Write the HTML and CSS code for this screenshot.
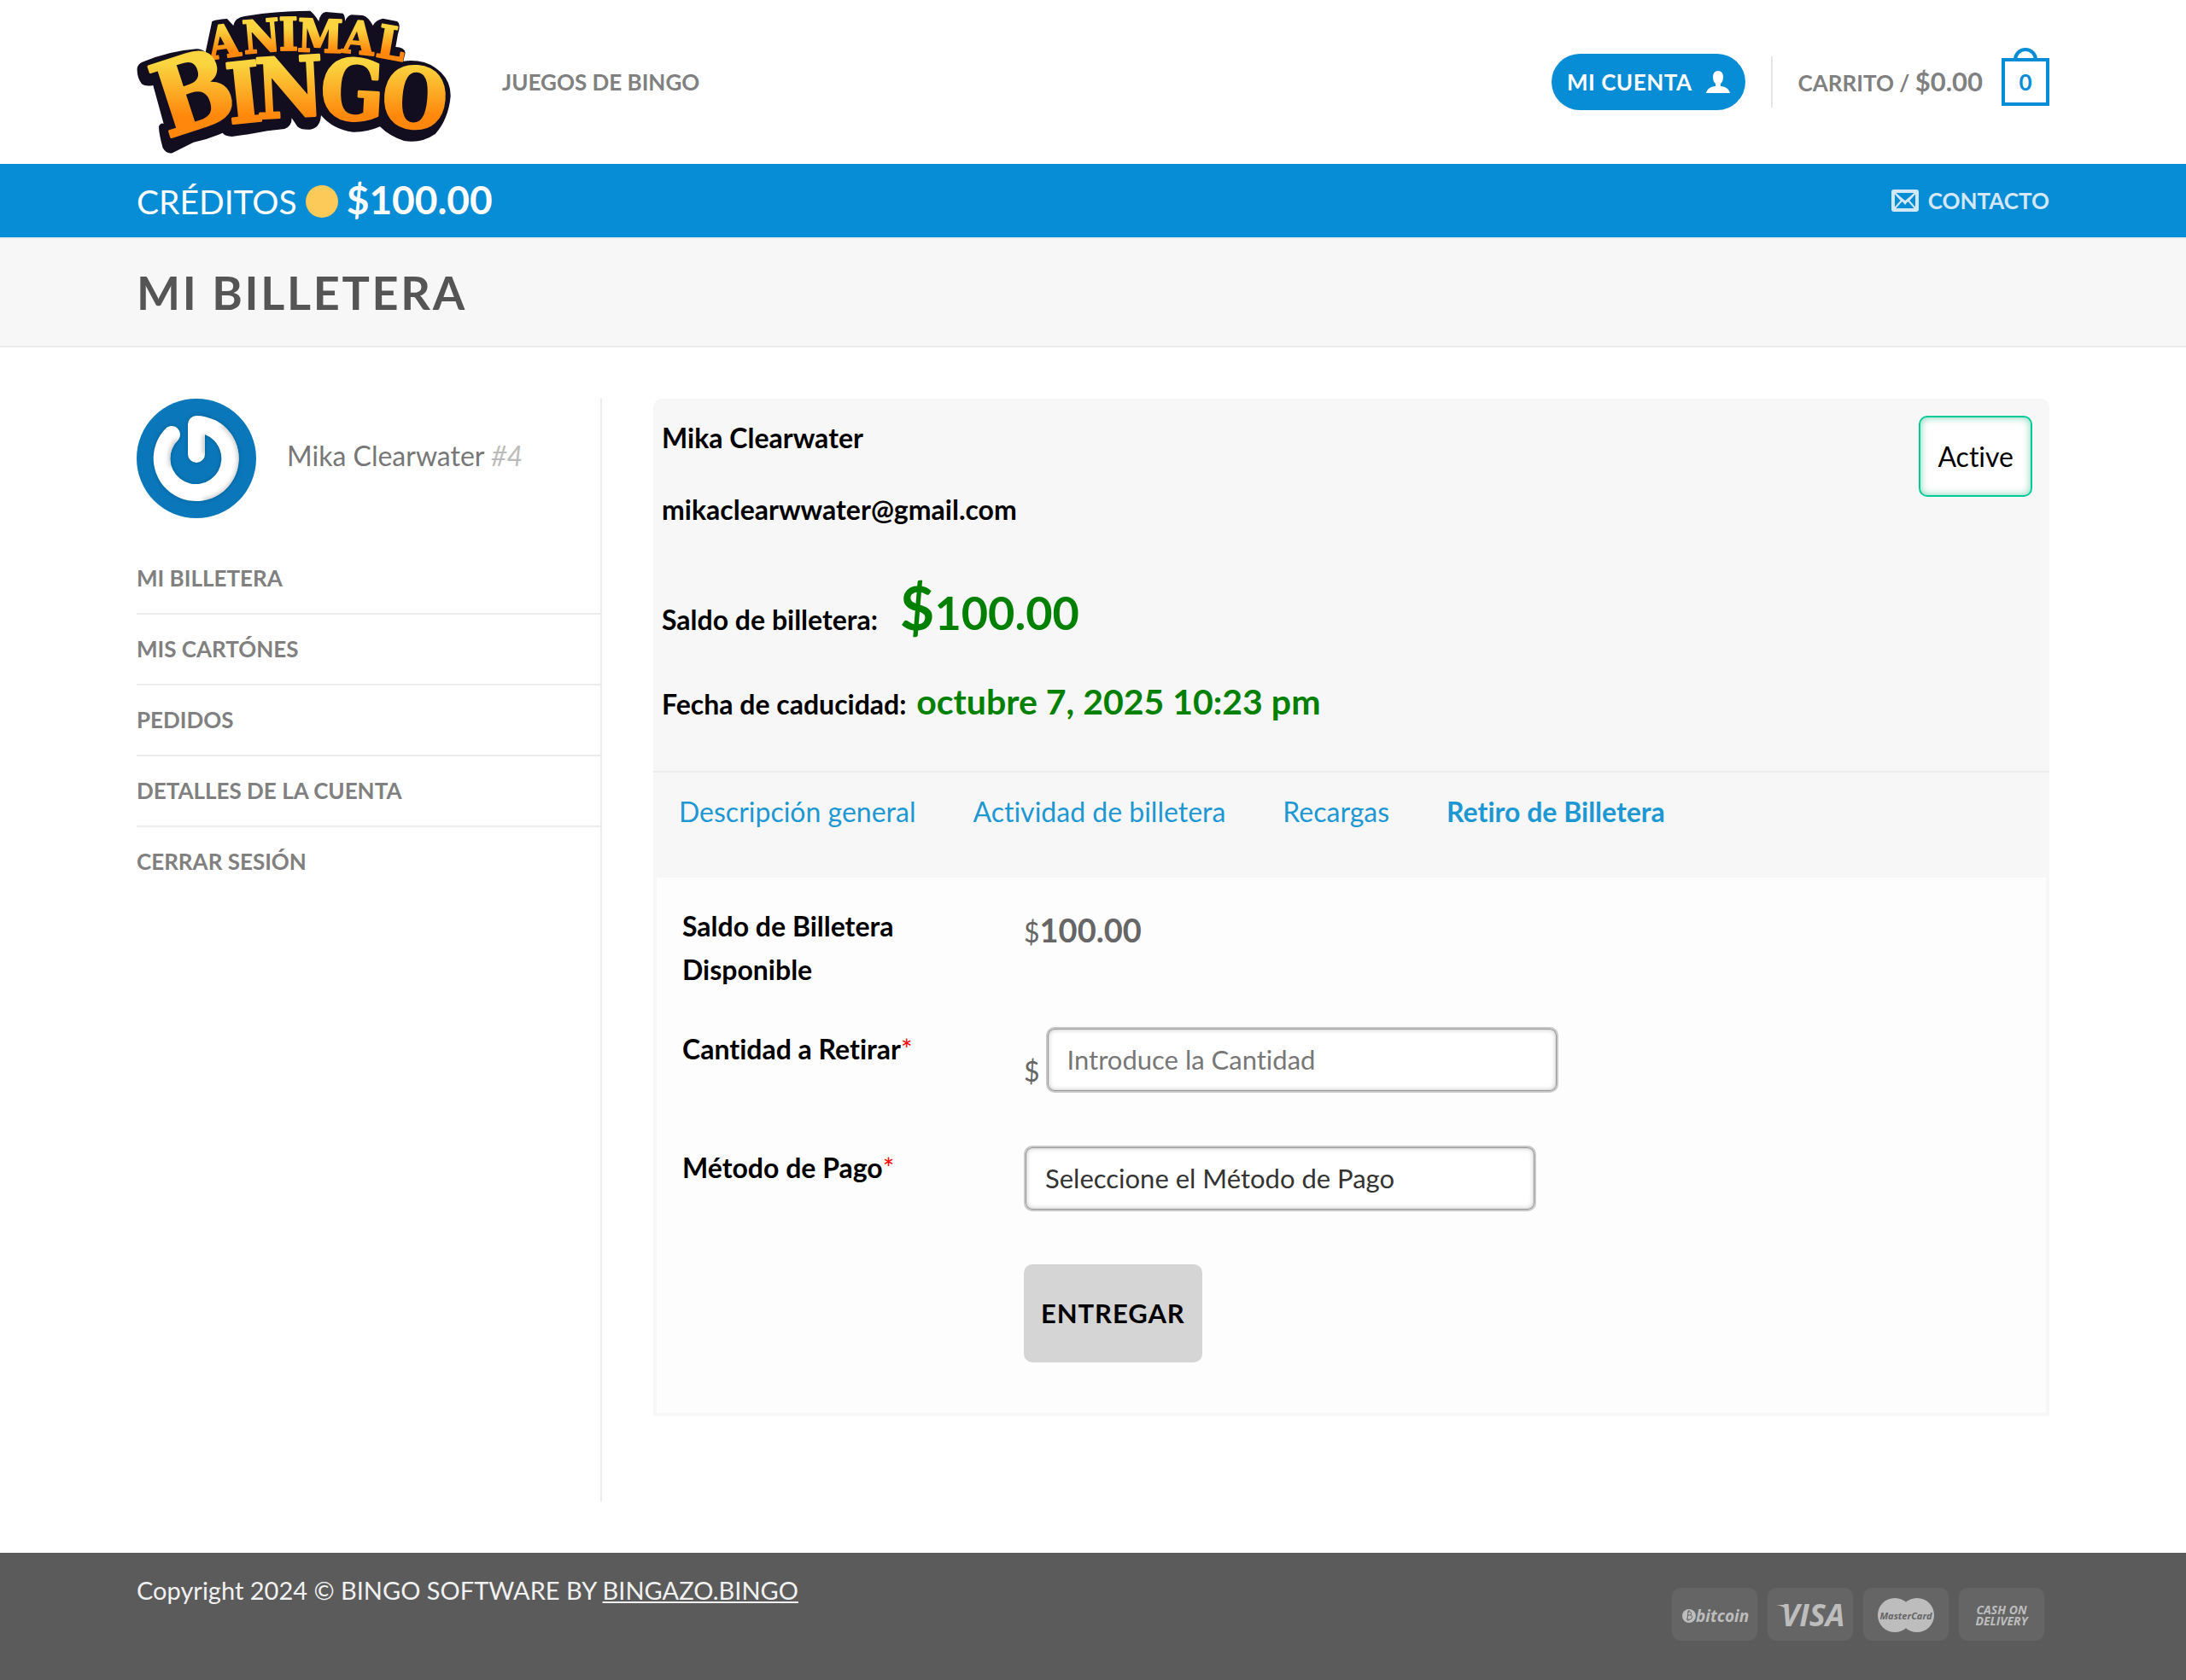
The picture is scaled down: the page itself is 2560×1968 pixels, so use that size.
FILE: index.html
```html
<!DOCTYPE html>
<html lang="es">
<head>
    <meta charset="UTF-8">
    <meta name="viewport" content="width=device-width, initial-scale=1.0">
    <title>Mi Billetera - Animal Bingo</title>
    <link rel="stylesheet" href="styles.css">
</head>
<body>
<header>
    <div class="container header-main">
        <a href="#" class="logo" aria-label="Animal Bingo">
            <svg width="370" height="172" viewBox="0 0 370 172">
                <defs>
                    <linearGradient id="gold-top" gradientUnits="userSpaceOnUse" x1="0" y1="8" x2="0" y2="58">
                        <stop offset="0.3" stop-color="#fad540"/>
                        <stop offset="0.85" stop-color="#ff870c"/>
                    </linearGradient>
                    <linearGradient id="gold-bottom" gradientUnits="userSpaceOnUse" x1="0" y1="55" x2="0" y2="150">
                        <stop offset="0.1" stop-color="#fad540"/>
                        <stop offset="0.75" stop-color="#ff870c"/>
                    </linearGradient>
                </defs>
                <!-- fondo oscuro del logo -->
                <path transform="translate(-20 -10) scale(0.3333)" fill="#120d1f" d="M62 240Q64 225 80 218Q180 178 270 172Q290 172 302 184L325 75Q345 68 378 66L400 90Q405 62 440 57L500 48Q600 38 670 38Q685 50 700 75Q705 45 725 42L785 47Q793 55 792 75Q800 55 815 52L855 54Q875 60 890 90Q900 70 925 65L975 75Q990 85 978 120L970 165Q1000 165 1004 185L997 215Q1080 205 1130 255Q1165 290 1163 340Q1155 420 1110 470Q1060 505 1000 495Q950 480 915 445Q870 465 820 464Q750 455 708 405Q705 450 670 455Q640 458 625 445L605 415Q605 445 580 453L520 460Q440 475 395 480Q370 478 362 467Q310 490 260 500L185 538Q165 542 152 520Q138 470 138 445Q145 430 155 435L118 300Q90 305 78 295Q60 270 62 240Z"/>
                <text class="logo-small" fill="url(#gold-top)" stroke="url(#gold-top)" x="86 126 167 188 240 279" y="60 53 49 50 51 56" rotate="-8 -5 -1 2 6 10">ANIMAL</text>
                <text class="logo-big" fill="url(#gold-bottom)" stroke="url(#gold-bottom)" x="36 109 141 214 285" y="152 135 129 128 136" rotate="-18 -6 -3 3 5"><tspan class="logo-b">B</tspan>INGO</text>
            </svg>
        </a>
        <nav class="main-nav">
            <a href="#">Juegos de Bingo</a>
        </nav>
        <div class="header-right">
            <a href="#" class="account-button">
                Mi cuenta
                <svg width="28" height="26" viewBox="0 0 28 26" fill="currentColor">
                    <path d="M14 0c4 0 6 3 6 7.500c0 3.500-1.300 6-3 7.500v3c6 .5 10 3.500 11 8H0c1-4.500 5-7.500 11-8v-3c-1.700-1.500-3-4-3-7.500C8 3 10 0 14 0z"/>
                </svg>
            </a>
            <span class="divider"></span>
            <a href="#" class="cart">
                <span>Carrito / <span class="cart-price">$0.00</span></span>
                <span class="cart-icon">0</span>
            </a>
        </div>
    </div>
    <div class="credits-bar">
        <div class="container credits-inner">
            <div class="credits">CRÉDITOS <span class="coin"></span> <strong>$100.00</strong></div>
            <a href="#" class="contact">
                <svg width="32" height="26" viewBox="0 0 32 26">
                    <rect x="2" y="2" width="28" height="22" rx="1" fill="none" stroke="currentColor" stroke-width="4"/>
                    <path d="M4 4l9 10M28 4l-9 10M4 22l8-9M28 22l-8-9" fill="none" stroke="currentColor" stroke-width="2"/>
                    <path d="M4 3l12 10L28 3L16 18z" fill="currentColor"/>
                </svg>
                Contacto
            </a>
        </div>
    </div>
</header>

<div class="page-title">
    <h1 class="container">Mi Billetera</h1>
</div>

<main class="container account">
    <aside class="sidebar">
        <div class="user">
            <svg class="avatar" width="140" height="140" viewBox="0 0 140 140">
                <defs>
                    <filter id="soft" x="-20%" y="-20%" width="140%" height="140%">
                        <feGaussianBlur stdDeviation="2.5"/>
                    </filter>
                    <clipPath id="ring">
                        <path d="M60 30a10 10 0 0 1 10-10A50 50 0 1 1 35 34A10 10 0 0 1 49 48A30 30 0 1 0 80 42V65a10 10 0 0 1-20 0z"/>
                    </clipPath>
                </defs>
                <circle cx="70" cy="70" r="70" fill="#0a77ba"/>
                <path d="M60 30a10 10 0 0 1 10-10A50 50 0 1 1 35 34A10 10 0 0 1 49 48A30 30 0 1 0 80 42V65a10 10 0 0 1-20 0z" fill="#065d93" filter="url(#soft)"/>
                <path d="M60 30a10 10 0 0 1 10-10A50 50 0 1 1 35 34A10 10 0 0 1 49 48A30 30 0 1 0 80 42V65a10 10 0 0 1-20 0z" fill="#fff"/>
                <g clip-path="url(#ring)">
                    <path d="M100 30A50 50 0 0 1 78 120M49 48A30 30 0 0 0 42 80M80 42V65" fill="none" stroke="#c4c4c4" stroke-width="5" filter="url(#soft)"/>
                </g>
            </svg>
            <span class="user-name">Mika Clearwater <em>#4</em></span>
        </div>
        <ul class="account-nav">
            <li><a href="#">Mi Billetera</a></li>
            <li><a href="#">Mis Cartónes</a></li>
            <li><a href="#">Pedidos</a></li>
            <li><a href="#">Detalles de la cuenta</a></li>
            <li><a href="#">Cerrar sesión</a></li>
        </ul>
    </aside>

    <section class="wallet">
        <div class="wallet-info">
            <div class="wallet-data">
                <p>Mika Clearwater</p>
                <p>mikaclearwwater@gmail.com</p>
                <p class="wallet-balance">Saldo de billetera: <span class="amount"><span class="currency">$</span>100.00</span></p>
                <p>Fecha de caducidad: <span class="expiry">octubre 7, 2025 10:23 pm</span></p>
            </div>
            <span class="status">Active</span>
        </div>
        <nav class="tabs">
            <a href="#">Descripción general</a>
            <a href="#">Actividad de billetera</a>
            <a href="#">Recargas</a>
            <a href="#" class="active">Retiro de Billetera</a>
        </nav>
        <form class="withdraw">
            <span class="label">Saldo de Billetera Disponible</span>
            <div class="available">$<strong>100.00</strong></div>

            <label class="label" for="amount">Cantidad a Retirar<span class="required">*</span></label>
            <div class="field">
                <span>$</span>
                <input type="text" id="amount" placeholder="Introduce la Cantidad">
            </div>

            <label class="label" for="method">Método de Pago<span class="required">*</span></label>
            <div class="field">
                <select id="method">
                    <option>Seleccione el Método de Pago</option>
                </select>
            </div>

            <button type="submit">Entregar</button>
        </form>
    </section>
</main>

<footer>
    <div class="container footer-inner">
        <div class="copyright">Copyright 2024 © BINGO SOFTWARE BY <a href="#">BINGAZO.BINGO</a></div>
        <div class="payments">
            <svg class="payment" viewBox="0 0 100 62">
                <circle cx="20" cy="33" r="8"/>
                <path class="coin-sign" d="M18 28h3q3 1 1 4q3 1 1 4q-1 2-6 1M19 28l-1 9M19 32h3M20 26v2M19 37v2"/>
                <text x="28" y="40" font-size="19">bitcoin</text>
            </svg>
            <svg class="payment" viewBox="0 0 100 62">
                <path d="M10 20h10c3 0 4 2 5 8c-3-4-8-7-15-8z"/>
                <text x="16" y="45" font-size="36">VISA</text>
            </svg>
            <svg class="payment" viewBox="0 0 100 62">
                <circle cx="37" cy="32" r="20"/>
                <circle cx="63" cy="32" r="20"/>
                <text class="dark" x="50" y="37" font-size="11" text-anchor="middle">MasterCard</text>
            </svg>
            <svg class="payment" viewBox="0 0 100 62">
                <text x="50" y="31" font-size="14" text-anchor="middle">CASH ON</text>
                <text x="50" y="44" font-size="14" text-anchor="middle">DELIVERY</text>
            </svg>
        </div>
    </div>
</footer>
</body>
</html>
```
FILE: styles.css
```css
*,
*::before {
    box-sizing: border-box;
}

body {
    margin: 0;
    font-family: Lato, sans-serif;
    font-size: 32px;
    font-variant-ligatures: none;
    line-height: 51px;
    color: #777;
    background: #fff;
}

a {
    color: inherit;
    text-decoration: none;
}

.container {
    width: calc(100% - 60px);
    max-width: 2240px;
    margin: 0 auto;
}

/* Header */
.header-main {
    display: flex;
    align-items: center;
    height: 192px;
    font-size: 26px;
    font-weight: bold;
    text-transform: uppercase;
    color: #808080;
}

.logo {
    display: block;
    height: 172px;
}

.logo svg {
    overflow: visible;
}

.logo-small,
.logo-big {
    font-family: "DejaVu Serif Condensed", "DejaVu Serif", serif;
    font-weight: bold;
    stroke-width: 3px;
    stroke-linejoin: round;
}

.logo-small {
    font-size: 53px;
    stroke-width: 2px;
}

.logo-big {
    font-size: 97px;
}

.logo-b {
    font-size: 119px;
}

.main-nav {
    margin-left: 58px;
}

.header-right {
    display: flex;
    align-items: center;
    margin-left: auto;
    gap: 30px;
}

.account-button {
    display: flex;
    align-items: center;
    gap: 16px;
    height: 66px;
    padding: 0 18px;
    border-radius: 33px;
    background: #078cd6;
    letter-spacing: 0.02em;
    color: #fff;
}

.divider {
    width: 2px;
    height: 60px;
    background: #e5e5e5;
}

.cart {
    display: flex;
    align-items: center;
    gap: 22px;
}

.cart-price {
    font-size: 31px;
}

.cart-icon {
    position: relative;
    width: 56px;
    height: 56px;
    border: 4px solid #078cd6;
    line-height: 48px;
    text-align: center;
    color: #078cd6;
}

/* asa de la bolsa */
.cart-icon::before {
    content: "";
    position: absolute;
    left: 10px;
    bottom: 100%;
    width: 28px;
    height: 16px;
    border: 4px solid #078cd6;
    border-bottom: 0;
    border-radius: 14px 14px 0 0;
}

.credits-bar {
    background: #078cd6;
    color: #fff;
}

.credits-inner {
    display: flex;
    align-items: center;
    justify-content: space-between;
    height: 86px;
}

.credits {
    font-size: 39px;
}

.credits strong {
    font-size: 46px;
}

.coin {
    display: inline-block;
    width: 38px;
    height: 38px;
    border-radius: 50%;
    background: #fcca58;
    vertical-align: -4px;
}

.contact {
    display: flex;
    align-items: center;
    gap: 11px;
    font-size: 26px;
    font-weight: bold;
    text-transform: uppercase;
    color: #d3e8f7;
}

.page-title {
    padding: 30px 0 29px;
    background: #f7f7f7;
    border-top: 2px solid #ececec;
    border-bottom: 2px solid #ececec;
}

h1 {
    font-size: 54px;
    line-height: 66px;
    letter-spacing: 0.05em;
    text-transform: uppercase;
    color: #555;
}

/* Mi cuenta */
.account {
    display: grid;
    grid-template-columns: 1fr 3fr;
    gap: 60px;
    padding: 60px 0;
}

.sidebar {
    border-right: 2px solid #ececec;
}

.user {
    display: flex;
    align-items: center;
    gap: 36px;
    margin-bottom: 30px;
}

.user-name {
    padding-bottom: 8px;
}

.user em {
    color: #bbb;
}

.account-nav {
    margin: 0;
    padding: 0;
    list-style: none;
    font-size: 26px;
    font-weight: bold;
    text-transform: uppercase;
    color: #808080;
}

.account-nav li {
    padding: 15px 0;
}

.account-nav li + li {
    border-top: 2px solid #ececec;
}

.account-nav a {
    display: block;
}

.wallet {
    margin-bottom: 100px;
}

.wallet-info {
    display: flex;
    align-items: flex-start;
    justify-content: space-between;
    padding: 20px 20px 48px 10px;
    border-bottom: 2px solid #ececec;
    border-radius: 10px 10px 0 0;
    background: #f7f7f7;
    font-weight: bold;
    color: #000;
}

.wallet-info p {
    margin: 0 0 33px;
    line-height: 1.6;
}

.wallet-info p:last-child {
    margin: 0;
}

.wallet-info .wallet-balance {
    margin-bottom: 22px;
}

.amount {
    margin-left: 18px;
    font-size: 54px;
    color: green;
}

.currency {
    font-size: 70px;
}

.expiry {
    margin-left: 4px;
    font-size: 41px;
    color: green;
}

.status {
    padding: 20px;
    border: 2px solid #00cc99;
    border-radius: 10px;
    box-shadow: inset 0 0 10px rgba(0, 170, 110, 0.5);
    background: #fff;
    font-weight: normal;
}

.tabs {
    display: flex;
    gap: 67px;
    padding: 20px 30px 52px;
    background: #f7f7f7;
    color: #1e98d2;
}

.tabs .active {
    font-weight: bold;
}

/* Formulario de retiro */
.withdraw {
    display: grid;
    grid-template-columns: 400px 1fr;
    row-gap: 42px;
    padding: 31px 30px 59px;
    border: 4px solid #f7f7f7;
    border-top: 0;
    background: #fdfdfd;
    color: #666;
}

.label {
    max-width: 320px;
    font-weight: bold;
    color: #000;
}

.required {
    font-weight: normal;
    color: red;
}

.available strong {
    font-size: 38px;
    line-height: 61px;
}

.field {
    display: flex;
    align-items: flex-end;
    gap: 7px;
    margin-bottom: 20px;
}

.field input,
.field select {
    width: 600px;
    height: 77px;
    padding: 0 23px;
    border: 2px solid #c8c8c8;
    border-radius: 10px;
    box-shadow: inset 0 0 0 1px #999, inset 0 0 6px #aaa;
    background: #fff;
    font: inherit;
    font-size: 31px;
    color: #333;
    appearance: none;
}

.field input::placeholder {
    color: #777;
}

.withdraw button {
    grid-column: 2;
    justify-self: start;
    height: 115px;
    padding: 0 20px;
    border: 0;
    border-radius: 10px;
    background: #d5d5d5;
    font: bold 31px Lato, sans-serif;
    letter-spacing: 0.03em;
    text-transform: uppercase;
    color: #000;
}

/* Footer */
footer {
    background: #5b5b5b;
    color: #f1f1f1;
}

.footer-inner {
    display: flex;
    justify-content: space-between;
    padding: 18px 6px 46px 0;
    font-size: 29px;
}

.copyright a {
    text-decoration: underline;
}

.payments {
    display: flex;
    gap: 12px;
    margin-top: 23px;
}

.payment {
    width: 100px;
    height: 62px;
    border-radius: 10px;
    background: #656565;
    fill: #bdbdbd;
    font-family: "Open Sans", sans-serif;
    font-weight: bold;
    font-style: italic;
}

.payment .dark {
    fill: #656565;
}

.payment .coin-sign {
    fill: none;
    stroke: #656565;
    stroke-width: 1px;
}
```
